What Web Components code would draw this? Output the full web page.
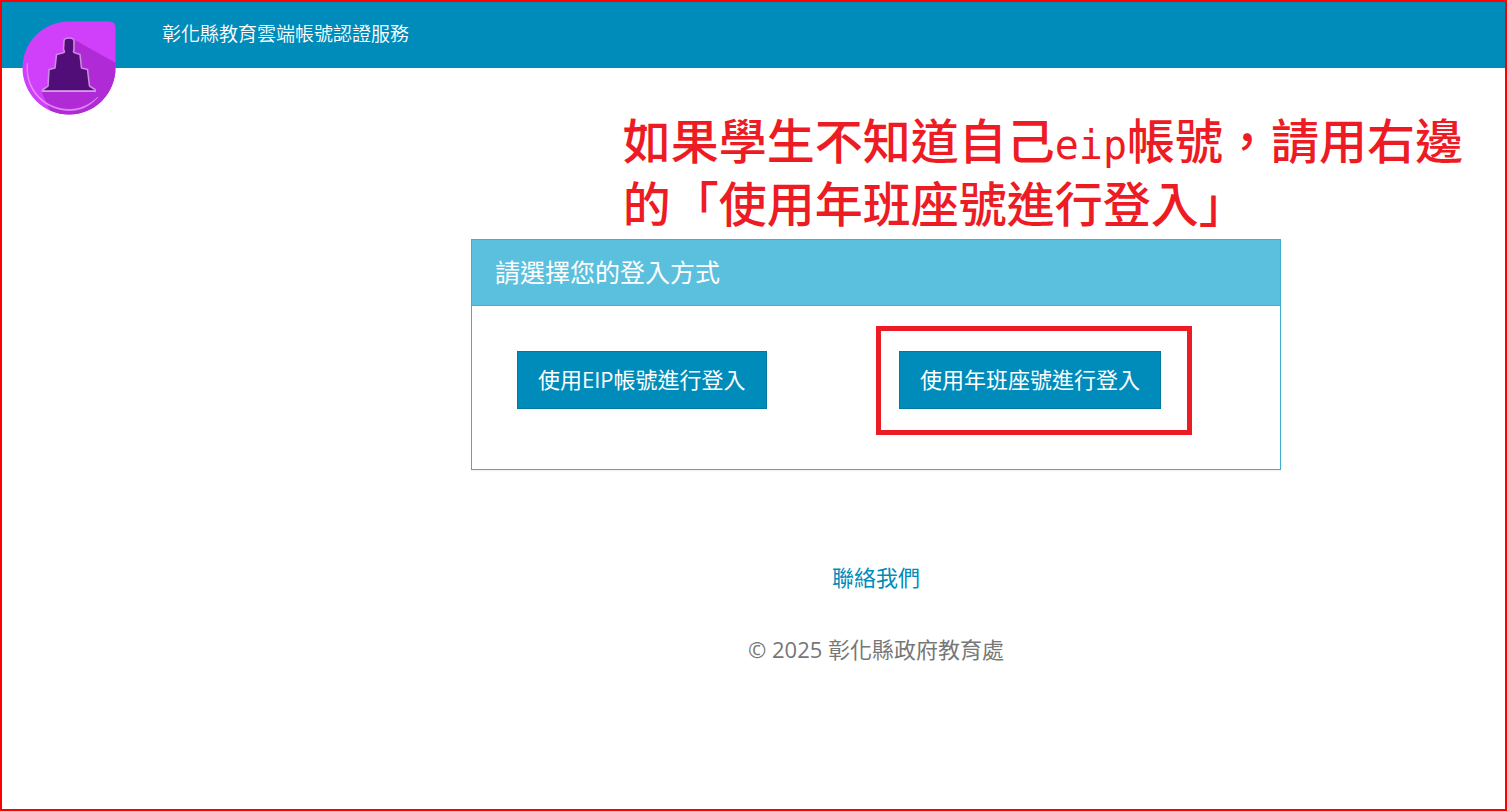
<!DOCTYPE html>
<html lang="zh-TW">
<head>
<meta charset="utf-8">
<meta name="viewport" content="width=device-width, initial-scale=1">
<title>彰化縣教育雲端帳號認證服務</title>
<style>
body { margin: 0; font-family: "Open Sans", "Noto Sans CJK TC", sans-serif; background: #fff; }
</style>
</head>
<body>
<login-page></login-page>
<script>
const define = (name, html) => {
  const template = document.createElement('template');
  template.innerHTML = html.trim();
  customElements.define(name, class extends HTMLElement {
    constructor() {
      super();
      this.attachShadow({ mode: 'open' }).append(template.content.cloneNode(true));
    }
  });
};

define('site-logo', `
<style>
:host { display: block; width: 94px; height: 94px; }
svg { display: block; width: 100%; height: 100%; }
</style>
<svg viewBox="0 0 94 94" role="img" aria-label="彰化縣">
  <defs><clipPath id="drop"><path d="M47 0.500H87Q93.500 0.500 93.500 7V47A46.500 46.500 0 1 1 47 0.500Z"/></clipPath></defs>
  <g clip-path="url(#drop)">
    <rect width="94" height="94" fill="#d040fb"/>
    <path d="M51 18L94 42V94H30L20 72Z" fill="#b02bd6"/>
  </g>
  <path d="M5.500 42C3 65 20 88 47 88.500C58 88.500 68 84 76 76C68 85 58 90 46 89.500C19 88 2 66 5.500 42Z" fill="#eaa5fc" stroke="#e28af9" stroke-width=".7"/>
  <path d="M42 20Q42 17 47 17Q52 17 52 20V28L51.500 31L53.500 32L58 33.500L59.500 47L65.500 48.500L67.500 65L73 68.500V70H20.500V69L26 65L27 48.500L33 47L34.500 33.500L40.500 32L42.500 31L41.500 28Z" fill="#510d78" stroke="#c98be0" stroke-width="1.600" stroke-linejoin="round"/>
  <path d="M20 70.300H74" stroke="#d49be6" stroke-width="1.500"/>
</svg>`);

define('site-header', `
<style>
:host { display: flex; align-items: center; position: relative; height: 66px; box-sizing: border-box; padding: 0 24px 2px 160px; background: #008cba; color: #fff; font-size: 19px; line-height: 30px; font-weight: 350; }
site-logo { position: absolute; left: 20px; top: 19px; }
</style>
<site-logo></site-logo><slot></slot>`);

define('page-note', `
<style>
:host { display: block; padding: 39px 24px 4px 41.300%; color: #ed1c24; font: 500 48px/63px "Noto Sans CJK TC", sans-serif; }
p { margin: 0; }
::slotted(span) { display: block; }
</style>
<p><slot></slot></p>`);

define('latin-word', `<style>
:host { font-family: "DejaVu Sans Mono", monospace; font-size: 40px; line-height: 1; }
</style><slot></slot>`);

define('login-button', `
<style>
:host { display: inline-block; }
button { display: block; height: 58px; padding: 0 20px 2px; border: 1px solid #0079a1; border-radius: 0; background: #008cba; color: #fff; font: inherit; font-size: 22px; line-height: 34px; white-space: nowrap; cursor: pointer; }
button:hover { background: #006687; }
:host([marked]) { padding: 20px 26px 21px 18px; border: 5px solid #ed1c24; }
</style>
<button type="button"><slot></slot></button>`);

define('choice-panel', `
<style>
:host { display: block; border: 1px solid #3db0d3; background: #fff; box-shadow: 0 1px 1px rgba(0,0,0,.05); }
h2 { margin: 0; padding: 14px 23px; border-bottom: 1px solid #3db0d3; background: #5bc0de; color: #fff; font-size: 25px; line-height: 37px; font-weight: 400; }
.choices { display: grid; grid-template-columns: 1fr 1fr; place-items: start; padding: 20px 0 34px; }
.choices ::slotted(:not([marked])) { margin: 25px 0 0 45px; }
</style>
<h2><slot name="title"></slot></h2>
<div class="choices"><slot></slot></div>`);

define('site-footer', `
<style>
:host { display: flex; flex-direction: column; align-items: center; gap: 38px; padding-top: 90px; color: #777; font-size: 22px; line-height: 34px; }
a { color: #008cba; text-decoration: none; }
a:hover { text-decoration: underline; }
p { margin: 0; }
</style>
<a href="#contact">聯絡我們</a>
<p><slot></slot></p>`);

define('login-page', `
<style>
:host { display: block; box-sizing: border-box; min-height: 100vh; border: 2px solid #f00; }
main { display: grid; grid-template-columns: 469fr 810fr 224fr; padding-top: 2px; }
.column { grid-column: 2; min-width: 0; }
</style>
<site-header>彰化縣教育雲端帳號認證服務</site-header>
<page-note><span>如果學生不知道自己<latin-word>eip</latin-word>帳號，請用右邊</span><span>的「使用年班座號進行登入」</span></page-note>
<main>
  <div class="column">
    <choice-panel>
      <span slot="title">請選擇您的登入方式</span>
      <login-button>使用EIP帳號進行登入</login-button>
      <login-button marked>使用年班座號進行登入</login-button>
    </choice-panel>
    <site-footer>© 2025 彰化縣政府教育處</site-footer>
  </div>
</main>`);
</script>
</body>
</html>
